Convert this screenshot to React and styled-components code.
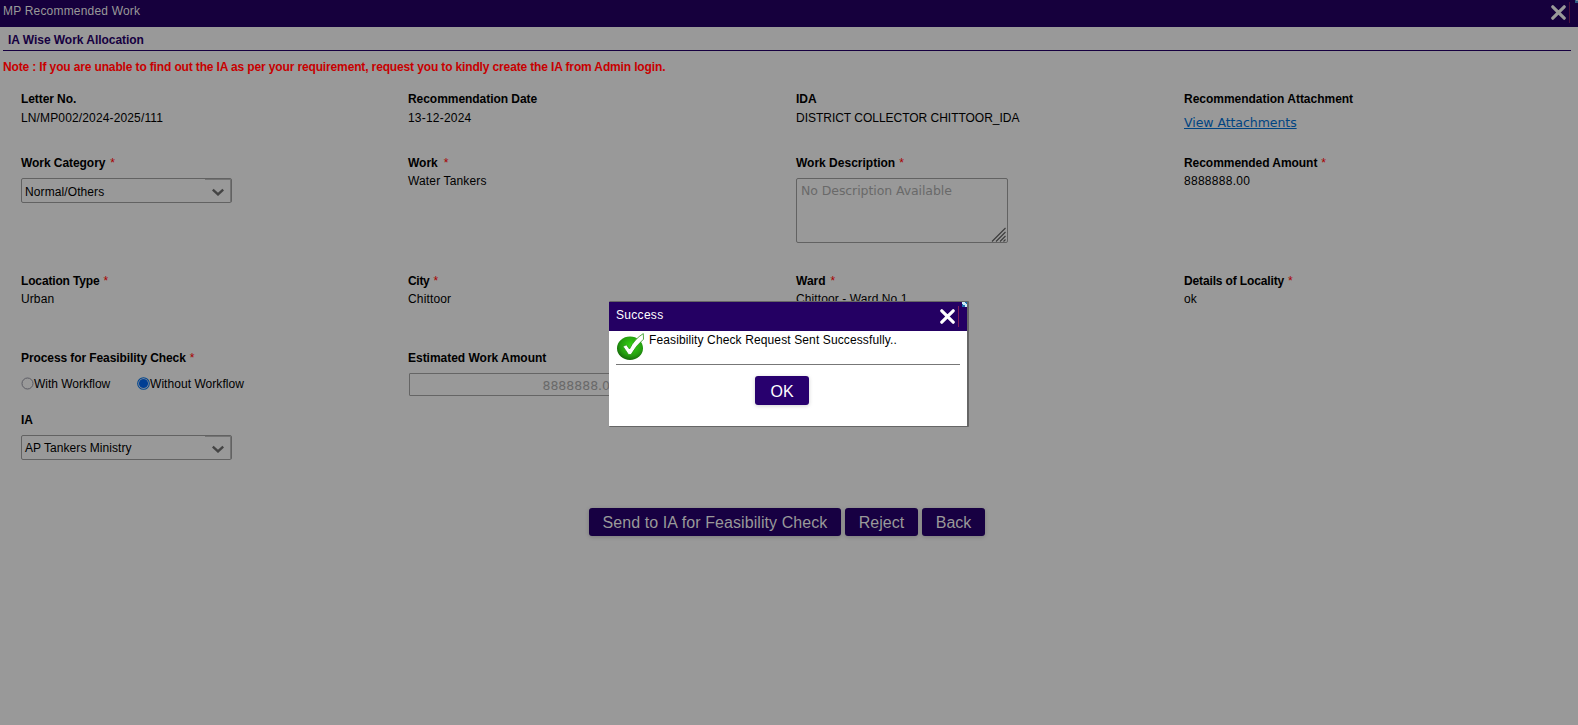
import React from 'react';
import styled, { createGlobalStyle } from 'styled-components';

const GlobalStyle = createGlobalStyle`
  * { box-sizing: border-box; }
  html, body { margin: 0; height: 100%; overflow: hidden; background: #999; }
  body { font: 12px/14px "Liberation Sans", Arial, sans-serif; color: #000; }
  input, textarea, button { margin: 0; }
`;

const Text = styled.span`
  white-space: nowrap;
  letter-spacing: ${(p) => p.$ls || 0}px;
`;

const Page = styled.div`
  display: flex;
  flex-direction: column;
  height: 725px;
  background: #999;
`;

const TitleBar = styled.header`
  display: flex;
  justify-content: space-between;
  height: ${(p) => p.$height}px;
  padding-left: ${(p) => p.$left}px;
  flex: none;
  line-height: ${(p) => p.$line}px;
  color: ${(p) => p.$color};
  background: ${(p) => p.$bg};
`;

const BarTools = styled.div`
  display: flex;
  align-items: flex-start;
`;

const CrossIcon = styled.svg`
  margin-top: ${(p) => p.$top}px;
`;

const Divider = styled.div`
  width: 1px;
  height: 21px;
  margin: ${(p) => p.$margin};
  background: ${(p) => p.$color};
`;

const SectionTitle = styled.h1`
  margin: 0 7px 0 3px;
  padding: 6px 5px 3px;
  height: 24px;
  font-size: 12px;
  line-height: 14px;
  color: #160040;
  border-bottom: 1px solid #160040;
`;

const Note = styled.p`
  margin: 9px 0 0 3px;
  font-weight: bold;
  color: #c80000;
`;

const Form = styled.section`
  display: grid;
  grid-template-columns: 387px 388px 388px 1fr;
  grid-template-rows: 64px 118px 77px 62px 95px;
  margin: 18px 0 0 21px;
`;

const Field = styled.div`
  display: flex;
  flex-direction: column;
  align-items: flex-start;
`;

const Label = styled.label`
  display: flex;
  gap: ${(p) => p.$gap || 4}px;
  font-weight: bold;
`;

const Star = styled.span`
  font-weight: normal;
  color: #a80000;
`;

const Value = styled.div`
  margin-top: ${(p) => p.$top || 4}px;
`;

const Link = styled.a`
  margin-top: 10px;
  font: 12.5px/14px "DejaVu Sans", Verdana, sans-serif;
  color: #004482;
  text-decoration: underline;
  text-underline-offset: 1px;
`;

const SelectBox = styled.div`
  display: flex;
  justify-content: space-between;
  width: 211px;
  height: 25px;
  margin-top: 8px;
  padding-left: 3px;
  border: 1px solid #626262;
  border-radius: 2px;
  line-height: ${(p) => p.$line || 25}px;
`;

const SelectArrow = styled.span`
  display: flex;
  justify-content: center;
  width: 26px;
  height: 24px;
  padding: 8px 0 0;
  border: solid #747474;
  border-width: 1px 1px 0 0;
`;

const Area = styled.div`
  display: flex;
  justify-content: space-between;
  width: 212px;
  height: 65px;
  margin-top: 8px;
  padding: 5px 0 0 4px;
  border: 1px solid #626262;
  border-radius: 2px;
  font: 12.5px/14px "DejaVu Sans", Verdana, sans-serif;
  color: #696969;
`;

const Grip = styled.svg`
  align-self: flex-end;
  flex: none;
  margin-right: 1px;
`;

const AmountInput = styled.div`
  width: 212px;
  height: 23px;
  margin: 8px 0 0 1px;
  padding: 5px 2px 0 0;
  border: 1px solid #656565;
  border-radius: 1px;
  text-align: right;
  font: 12.5px/14px "DejaVu Sans", Verdana, sans-serif;
  color: #696969;
`;

const Radios = styled.div`
  display: flex;
  margin-top: 12px;
`;

const Option = styled.div`
  display: flex;
  width: ${(p) => p.$w}px;
`;

const Actions = styled.div`
  display: flex;
  gap: 4px;
  margin-left: 589px;
`;

const Button = styled.button`
  display: flex;
  align-items: center;
  justify-content: center;
  width: ${(p) => p.$w}px;
  height: ${(p) => p.$h || 28}px;
  padding: ${(p) => p.$top || 0}px 0 0;
  border: 0;
  border-radius: 3px;
  font: 16px/18px "Liberation Sans", Arial, sans-serif;
  color: ${(p) => p.$color || '#999'};
  background: ${(p) => p.$bg || '#170042'};
  box-shadow: 0 1px 4px rgba(0, 0, 0, ${(p) => p.$shadow || 0.2});
`;

const Dialog = styled.div`
  position: absolute;
  left: 609px;
  top: 301px;
  width: 360px;
  height: 126px;
  border: solid #666;
  border-width: 1px 2px 1px 0;
  border-radius: 1px;
  background: #fff;
`;

const DialogMessage = styled.div`
  display: flex;
  gap: 5px;
  height: 34px;
  margin: 0 7px;
  padding-top: 2px;
  border-bottom: 1px solid #777;
`;

const DialogFooter = styled.div`
  display: flex;
  padding: 11px 0 0 146px;
`;

const Cross = ({ color, top }) => (
  <CrossIcon $top={top} width="15" height="15" viewBox="0 0 15 15">
    <path d="M1.8 1.8 13.2 13.2M13.2 1.8 1.8 13.2" stroke={color} strokeWidth="3.2" strokeLinecap="round" />
  </CrossIcon>
);

const Corner = ({ dim }) => (
  <svg width={dim ? 3 : 5} height={dim ? 3 : 5} viewBox={dim ? '0 2 3 3' : '0 0 5 5'}>
    <path d="M0 0h5v5h-5z" fill={dim ? '#2c5c80' : '#2070b0'} />
    <path d="M0 0h3v1h1v1h1v3h-2v-2h-2v-1h-1z" fill={dim ? '#7a8f99' : '#d0ecf8'} />
  </svg>
);

const Radio = ({ checked }) => (
  <svg width="13" height="13" viewBox="0 0 13 13">
    <circle cx="6.5" cy="6.5" r={checked ? 5.8 : 5.5} fill="none" stroke={checked ? '#00458f' : '#5c5c64'} strokeWidth={checked ? 1.1 : 1} />
    {checked && <circle cx="6.5" cy="6.5" r="4.6" fill="#003e94" />}
  </svg>
);

const SuccessIcon = () => (
  <svg width="28" height="28" viewBox="0 0 28 28">
    <defs>
      <radialGradient id="green" cx="0.55" cy="0.4" r="0.6">
        <stop offset="0" stopColor="#35d812" />
        <stop offset="0.7" stopColor="#259d10" />
        <stop offset="1" stopColor="#176c0b" />
      </radialGradient>
    </defs>
    <ellipse cx="14" cy="15.3" rx="13" ry="11.7" fill="url(#green)" />
    <path d="M7 13.4 10.4 11.8 13.5 16Q18.4 6 27.3 .6L27.5 6.2Q20.3 12.3 15 21.6L12.5 21.6Z" fill="#fff" stroke="#2a9417" strokeWidth="0.8" />
  </svg>
);

function Select({ value, ls, line }) {
  return (
    <SelectBox $line={line}>
      <Text $ls={ls}>{value}</Text>
      <SelectArrow>
        <svg width="12" height="8" viewBox="0 0 12 8">
          <path d="M0.8 1.6 6 6.4 11.2 1.6" fill="none" stroke="#444" strokeWidth="2.4" />
        </svg>
      </SelectArrow>
    </SelectBox>
  );
}

function Item({ label, ls, required, gap, value, vls, top, children }) {
  return (
    <Field>
      <Label $gap={gap}>
        <Text $ls={ls}>{label}</Text>
        {required && <Star>*</Star>}
      </Label>
      {value && <Value $top={top}><Text $ls={vls}>{value}</Text></Value>}
      {children}
    </Field>
  );
}

export default function App() {
  return (
    <>
      <GlobalStyle />
      <Page>
        <TitleBar $height={27} $left={3} $line={22} $color="#999" $bg="#16003d">
          <Text $ls={0.19}>MP Recommended Work</Text>
          <BarTools>
            <Cross color="#999" top={5} />
            <Divider $color="#4c123e" $margin="2px 5px 0 3px" />
            <Corner dim />
          </BarTools>
        </TitleBar>
        <SectionTitle><Text $ls={-0.04}>IA Wise Work Allocation</Text></SectionTitle>
        <Note>
          <Text $ls={-0.14}>Note : If you are unable to find out the IA as per your requirement, request you to kindly create the IA from Admin login.</Text>
        </Note>
        <Form>
          <Item label="Letter No." ls={-0.08} value="LN/MP002/2024-2025/111" vls={0.14} top={5} />
          <Item label="Recommendation Date" ls={-0.05} value="13-12-2024" vls={0.2} top={5} />
          <Item label="IDA" value="DISTRICT COLLECTOR CHITTOOR_IDA" vls={-0.02} top={5} />
          <Item label="Recommendation Attachment" ls={-0.02}><Link><Text $ls={-0.05}>View Attachments</Text></Link></Item>

          <Item label="Work Category" ls={-0.06} gap={5} required><Select value="Normal/Others" ls={0.1} line={26} /></Item>
          <Item label="Work" gap={6} required value="Water Tankers" vls={0.15} />
          <Item label="Work Description" required>
            <Area>
              <Text $ls={-0.08}>No Description Available</Text>
              <Grip width="15" height="15" viewBox="0 0 15 15">
                <path d="M1 14.5 14.5 1M5 14.5 14.5 5M9 14.5 14.5 9M12.5 14.5 14.5 12.5" stroke="#3c3c3c" strokeWidth="1.1" fill="none" />
              </Grip>
            </Area>
          </Item>
          <Item label="Recommended Amount" ls={-0.05} required value="8888888.00" vls={0.28} />

          <Item label="Location Type" ls={-0.15} required value="Urban" vls={0.1} />
          <Item label="City" ls={-0.3} required value="Chittoor" vls={0.15} />
          <Item label="Ward" gap={5} required value="Chittoor - Ward No.1" vls={0.1} />
          <Item label="Details of Locality" ls={-0.14} required value="ok" />

          <Item label="Process for Feasibility Check" ls={-0.09} required>
            <Radios>
              <Option $w={116}><Radio /><Text $ls={-0.02}>With Workflow</Text></Option>
              <Option $w={120}><Radio checked /><Text $ls={0.05}>Without Workflow</Text></Option>
            </Radios>
          </Item>
          <Item label="Estimated Work Amount" ls={-0.02}><AmountInput><Text>8888888.00</Text></AmountInput></Item>
          <Field />
          <Field />

          <Item label="IA"><Select value="AP Tankers Ministry" ls={0.05} /></Item>
        </Form>
        <Actions>
          <Button $w={252} $top={1}><Text $ls={0.08}>Send to IA for Feasibility Check</Text></Button>
          <Button $w={73} $top={1}><Text>Reject</Text></Button>
          <Button $w={63} $top={1}><Text>Back</Text></Button>
        </Actions>
      </Page>
      <Dialog role="dialog">
        <TitleBar $height={29} $left={7} $line={26} $color="#fff" $bg="#240063">
          <Text $ls={0.3}>Success</Text>
          <BarTools>
            <Cross color="#fff" top={7} />
            <Divider $color="#7c1e5c" $margin="4px 3px 0 3px" />
            <Corner />
          </BarTools>
        </TitleBar>
        <DialogMessage>
          <SuccessIcon />
          <Text $ls={0.12}>Feasibility Check Request Sent Successfully..</Text>
        </DialogMessage>
        <DialogFooter>
          <Button $w={54} $h={29} $top={2} $color="#fff" $bg="#28006e" $shadow={0.18}><Text>OK</Text></Button>
        </DialogFooter>
      </Dialog>
    </>
  );
}
